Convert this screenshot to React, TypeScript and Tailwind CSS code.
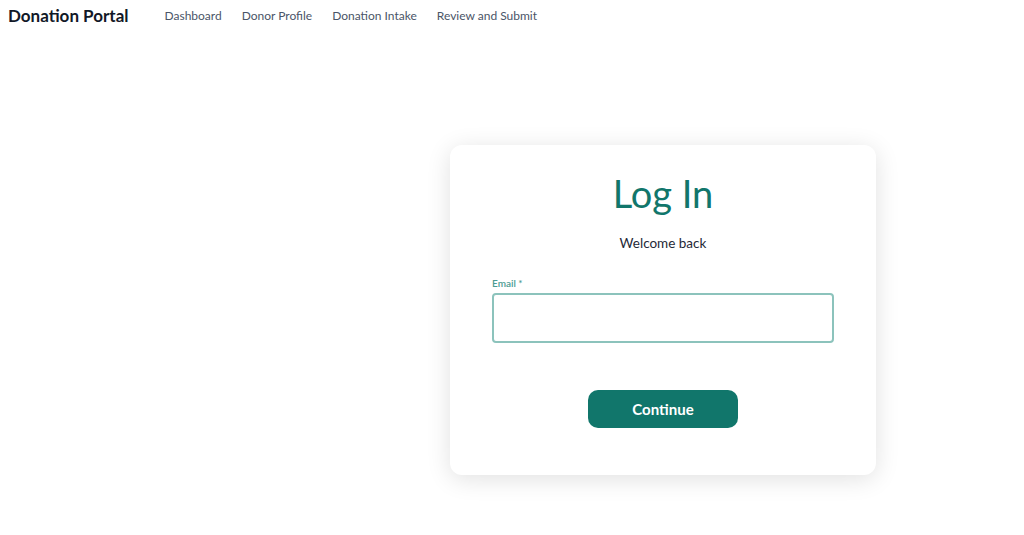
import { useState } from 'react'

const navLinks = ['Dashboard', 'Donor Profile', 'Donation Intake', 'Review and Submit']

function TopNav() {
  return (
    <header className="flex h-8 items-center px-2">
      <span className="text-[17px] font-bold text-[#111827]">Donation Portal</span>
      <nav className="ml-[36px] flex items-center gap-5">
        {navLinks.map((link) => (
          <a key={link} href="#" className="text-[12px] text-[#4a5568]">
            {link}
          </a>
        ))}
      </nav>
    </header>
  )
}

function LoginCard() {
  const [email, setEmail] = useState('')

  return (
    <div className="w-[426px] rounded-xl bg-white px-[42px] pt-[24px] pb-[47px] shadow-[0_4px_24px_rgba(0,0,0,0.12)]">
      <h1 className="text-center text-[38px] leading-[48px] text-[#11766b]">Log In</h1>
      <p className="mt-[16px] text-center text-[13.5px] text-[#1f2937]">Welcome back</p>

      <form className="mt-[24px]" onSubmit={(e) => e.preventDefault()}>
        <label htmlFor="email" className="block text-[10px] font-semibold leading-[12px] text-[#4c9c92]">
          Email *
        </label>
        <input
          id="email"
          type="email"
          value={email}
          onChange={(e) => setEmail(e.target.value)}
          className="mt-[4px] block h-[50px] w-full rounded-[4px] border-2 border-[#8cc3bc] bg-white px-3 text-[14px] outline-none"
        />
        <div className="mt-[47px] flex justify-center">
          <button
            type="submit"
            className="h-[38px] w-[150px] rounded-[10px] bg-[#11766b] text-[15px] font-bold text-white"
          >
            Continue
          </button>
        </div>
      </form>
    </div>
  )
}

export default function App() {
  return (
    <div className="min-h-[535px] bg-white font-['Lato',sans-serif]">
      <TopNav />
      <main className="pt-[113px] pl-[450px]">
        <LoginCard />
      </main>
    </div>
  )
}
